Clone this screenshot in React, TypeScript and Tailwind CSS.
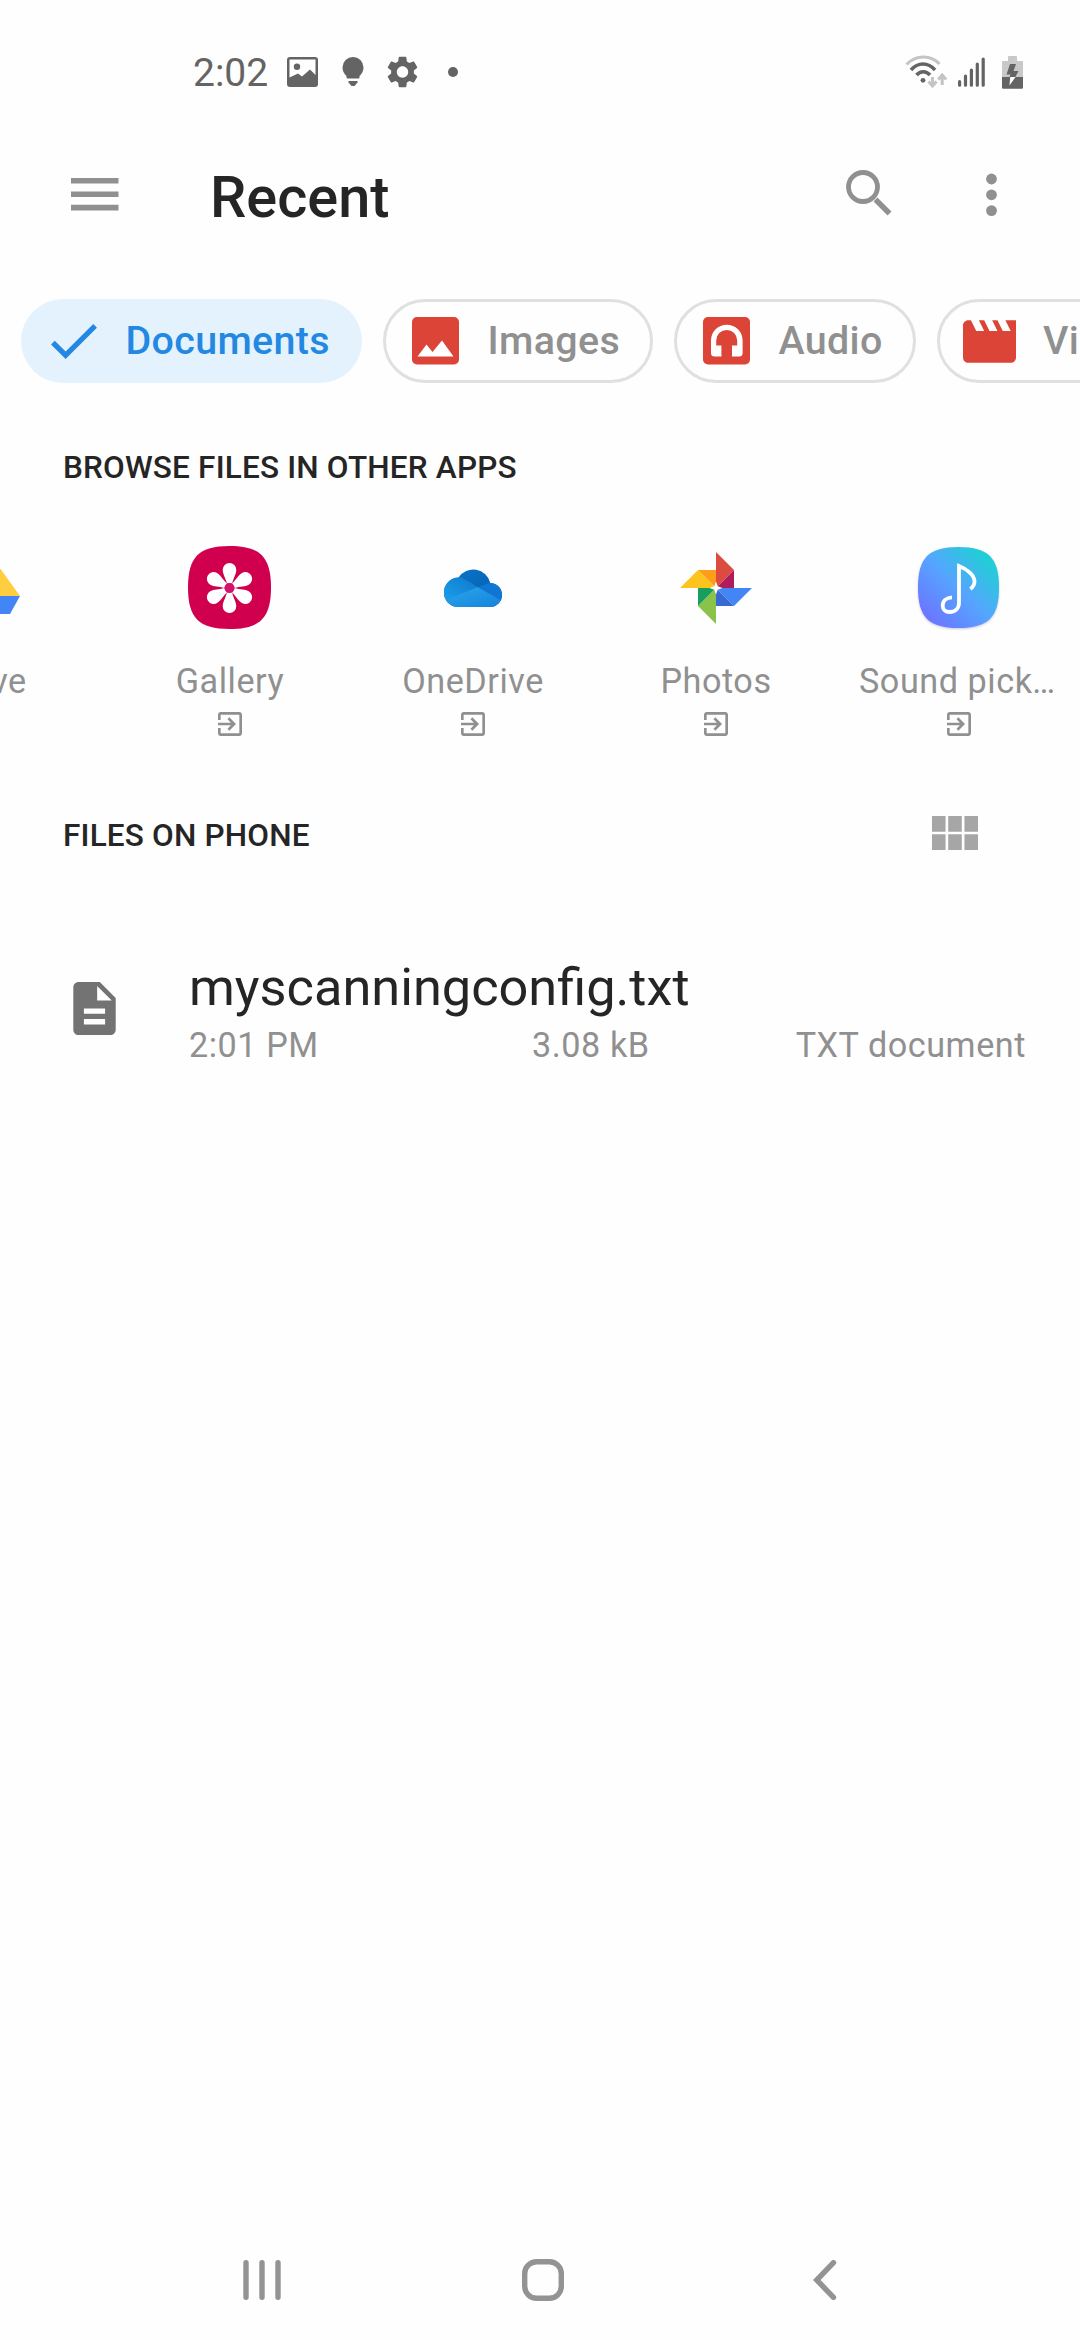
import React from "react";

const SQUIRCLE = "M41.5 0C72 0 83 11 83 41.5S72 83 41.5 83 0 72 0 41.5 11 0 41.5 0Z";

function StatusBar() {
  return (
    <div className="flex h-36 shrink-0 items-center pl-[193px] pr-[57px] text-[#646464]">
      <span className="mt-[3px] w-[94px] text-[39px] leading-none">2:02</span>
      <svg className="h-[30px] w-[31px]" viewBox="0 0 31 30">
        <path
          fill="currentColor"
          fillRule="evenodd"
          d="M3 0H28a3 3 0 0 1 3 3V27a3 3 0 0 1-3 3H3a3 3 0 0 1-3-3V3a3 3 0 0 1 3-3ZM2.5 2.5V20.5L11 16.5 15 19.5 23 12.5 28.5 18V2.5ZM10 6.5a3.2 3.2 0 1 1 0 6.4 3.2 3.2 0 0 1 0-6.4Z"
        />
      </svg>
      <svg className="ml-6 h-[30px] w-[22px]" viewBox="0 0 22 30" fill="currentColor">
        <path d="M11 0a10.5 10.5 0 0 1 10.5 10.5c0 4-2 6.5-4 8.500V20.500a1 1 0 0 1-1 1H5.500a1 1 0 0 1-1-1V19c-2-2-4-4.500-4-8.500A10.500 10.500 0 0 1 11 0Z" />
        <path d="M6.500 24h9v1.500L12.500 29h-3L6.500 25.500Z" />
      </svg>
      <svg className="ml-[23px] h-8 w-[31px]" viewBox="2.200 2 19.600 20" fill="currentColor">
        <path d="M19.140 12.940c.04-.3.06-.61.06-.94 0-.32-.02-.64-.07-.94l2.030-1.580c.18-.14.23-.41.12-.61l-1.920-3.320c-.12-.22-.37-.29-.59-.22l-2.390.96c-.5-.38-1.030-.7-1.620-.94L14.400 2.810c-.04-.24-.24-.41-.48-.41h-3.840c-.24 0-.43.17-.47.41L9.250 5.350c-.59.24-1.130.57-1.620.94L5.240 5.330c-.22-.08-.47 0-.59.22L2.740 8.870c-.12.21-.08.47.12.61l2.030 1.580c-.05.3-.09.63-.09.94s.02.64.07.94l-2.030 1.580c-.18.14-.23.41-.12.61l1.920 3.320c.12.22.37.29.59.22l2.390-.96c.5.38 1.030.7 1.620.94l.36 2.540c.05.24.24.41.48.41h3.840c.24 0 .44-.17.47-.41l.36-2.540c.59-.24 1.130-.56 1.620-.94l2.390.96c.22.08.47 0 .59-.22l1.920-3.320c.12-.22.07-.47-.12-.61l-2.010-1.580zM12 15.600c-1.980 0-3.600-1.620-3.600-3.600s1.620-3.600 3.600-3.600 3.600 1.620 3.600 3.600-1.620 3.600-3.600 3.600z" />
      </svg>
      <span className="ml-[30px] size-2.5 rounded-full bg-[#646464]" />

      <svg className="ml-auto h-[34px] w-[42px]" viewBox="0 0 42 34" fill="none">
        <path d="M1.500 9.500C11-.5 26-.5 34.500 9" stroke="#c4c4c4" strokeWidth="3" />
        <path d="M6 15C13 7 23 7 30 15" stroke="#646464" strokeWidth="3.500" />
        <path d="M11.500 20C15.500 15.500 21 15.500 25 20" stroke="#646464" strokeWidth="3.500" />
        <circle cx="18" cy="25.300" r="2.400" fill="#646464" />
        <g stroke="#c4c4c4" strokeWidth="3">
          <path d="M27.500 22V31M23.500 26.500L27.500 31 31.500 26.500" />
          <path d="M37.200 30V21M33.200 24.500L37.200 20 41.200 24.500" />
        </g>
      </svg>
      <svg className="ml-[11px] h-[30px] w-[27px]" viewBox="0 0 27 30" stroke="#646464" strokeWidth="3.200" strokeLinecap="round">
        <path d="M1.600 24.500V28.200M7.500 19V28.200M13.400 13V28.200M19.300 7V28.200M25.200 2V28.200" />
      </svg>
      <svg className="ml-[17px] h-[33px] w-[21px]" viewBox="0 0 21 33">
        <path fill="#c8c8c8" d="M7 0h7a1 1 0 0 1 1 1V5h5a1 1 0 0 1 1 1V21H0V6a1 1 0 0 1 1-1H6V1a1 1 0 0 1 1-1Z" />
        <path fill="#646464" d="M0 21H21V31.500a1.200 1.200 0 0 1-1.200 1.200H1.200A1.200 1.200 0 0 1 0 31.500Z" />
        <path fill="#646464" d="M8 8H14L11.500 15H16.500L13.300 21H7.500L8.500 18.500H4.500Z" />
        <path fill="#fff" d="M8.200 21H13.500L7.500 29.500Z" />
      </svg>
    </div>
  );
}

function Toolbar() {
  return (
    <header className="flex h-[102px] shrink-0 items-center pl-[71px] pr-[83px] text-[#909090]">
      <svg className="-mt-px h-[33px] w-12" viewBox="0 0 48 33" fill="currentColor">
        <path d="M0 0H47.500V5.600H0ZM0 13.500H47.500V19.100H0ZM0 26.800H47.500V32.400H0Z" />
      </svg>
      <h1 className="ml-[91px] mt-1 text-[57.700px] font-medium leading-[60px] text-[#252525]">Recent</h1>
      <svg className="-mt-1 ml-auto h-[46px] w-[46px]" viewBox="0 0 46 46" fill="none" stroke="currentColor">
        <circle cx="17" cy="17" r="14.500" strokeWidth="4.800" />
        <path d="M29.500 29.500L43.500 43.500" strokeWidth="5.500" />
      </svg>
      <svg className="ml-[94px] h-11 w-[11px]" viewBox="0 0 11 44" fill="currentColor">
        <circle cx="5.500" cy="6" r="5.400" />
        <circle cx="5.500" cy="21.800" r="5.400" />
        <circle cx="5.500" cy="37.600" r="5.400" />
      </svg>
    </header>
  );
}

function Chips() {
  const chip =
    "flex h-[84px] shrink-0 items-center rounded-full border-[3px] border-[#e0e0e0] text-[39.400px] tracking-[0.350px] font-medium leading-none text-[#909090]";
  return (
    <div className="mt-[53px] flex shrink-0 gap-[21px] overflow-hidden pl-[21px]">
      <div className="flex h-[84px] w-[341px] shrink-0 items-center rounded-full bg-[#e3f2fd] pl-[30px] text-[39.400px] tracking-[0.350px] font-medium leading-none text-[#2388e2]">
        <svg className="h-[35px] w-[46px]" viewBox="3.410 5.590 17.590 13.410" fill="currentColor">
          <path d="M9 16.170L4.830 12l-1.420 1.410L9 19 21 7l-1.410-1.410z" />
        </svg>
        <span className="ml-[28.500px]">Documents</span>
      </div>
      <div className={chip + " w-[270px] pl-[26px]"}>
        <svg className="h-12 w-[47px]" viewBox="0 0 47 48">
          <rect width="47" height="47.500" rx="5" fill="#db4437" />
          <path fill="#fff" d="M5.500 39.500 14.500 27.500 20.500 35 30 23.500 41.500 39.500Z" />
        </svg>
        <span className="ml-[28.500px]">Images</span>
      </div>
      <div className={chip + " w-[242px] pl-[26px]"}>
        <svg className="h-12 w-[47px]" viewBox="0 0 47 48">
          <rect width="47" height="47.500" rx="5" fill="#db4437" />
          <path
            fill="#fff"
            d="M8 36V23.500a15.800 15.800 0 0 1 31.600 0V36a3.500 3.500 0 0 1-3.500 3.500H29V28.500h5.200V23.500a10.500 10.500 0 0 0-21 0v5h5.200V39.500H11.500A3.500 3.500 0 0 1 8 36Z"
          />
        </svg>
        <span className="ml-[28.500px]">Audio</span>
      </div>
      <div className={chip + " w-[250px] pl-[23px]"}>
        <svg className="h-[43px] w-[53px]" viewBox="2 4 20 16" fill="#db4437">
          <path d="M18 4l2 4h-3l-2-4h-2l2 4h-3l-2-4H8l2 4H7L5 4H4c-1.100 0-1.990.9-1.990 2L2 18c0 1.100.9 2 2 2h16c1.100 0 2-.9 2-2V4h-4z" />
        </svg>
        <span className="ml-[27px]">Videos</span>
      </div>
    </div>
  );
}

function DriveIcon() {
  return (
    <svg className="h-[84px] w-[84px]" viewBox="0 0 84 84">
      <path fill="#0f9d58" d="M29 14 9 50 18 68 38 31Z" />
      <path fill="#ffcd40" d="M28 14H49L75 50H54Z" />
      <path fill="#4285f4" d="M28 50H75L65 68H18Z" />
    </svg>
  );
}

function GalleryIcon() {
  return (
    <svg className="h-[84px] w-[84px]" viewBox="0 0 84 84">
      <path fill="#d1004f" d={SQUIRCLE} />
      <g fill="#fff" transform="translate(41.500 42)">
        {[0, 60, 120, 180, 240, 300].map((a) => (
          <path
            key={a}
            transform={`rotate(${a})`}
            d="M-2.600-4.500C-3.800-10-6.800-14-6.800-18.300a6.800 6.800 0 0 1 13.600 0C6.800-14 3.800-10 2.600-4.500Z"
          />
        ))}
      </g>
      <circle cx="41.500" cy="42" r="5" fill="#d4116e" />
    </svg>
  );
}

function OneDriveIcon() {
  return (
    <svg className="h-[38px] w-[58px]" viewBox="0 0 58 38">
      <defs>
        <clipPath id="cloud">
          <path d="M14 38A14.300 14.300 0 0 1 0 23.500 14.800 14.800 0 0 1 14.500 8.600 17.500 17.500 0 0 1 46.300 14 12 12 0 0 1 58 26 12 12 0 0 1 46 38Z" />
        </clipPath>
        <linearGradient id="cloudLeft" x1="0" y1="1" x2="1" y2="0">
          <stop offset="0" stopColor="#1ba0ea" />
          <stop offset="1" stopColor="#0f78cd" />
        </linearGradient>
        <linearGradient id="cloudTop" x1="0" y1="0" x2="1" y2="1">
          <stop offset="0" stopColor="#0a78cb" />
          <stop offset="1" stopColor="#0458ab" />
        </linearGradient>
        <linearGradient id="cloudBottom" x1="0" y1="0" x2="1" y2="1">
          <stop offset="0" stopColor="#2aa9ec" />
          <stop offset="1" stopColor="#1581dc" />
        </linearGradient>
      </defs>
      <g clipPath="url(#cloud)">
        <path fill="url(#cloudTop)" d="M0 0H58V38H0Z" />
        <path fill="url(#cloudLeft)" d="M0 8.500H15C20 9 24 12 33.500 18L0 33Z" />
        <path fill="#1076d4" d="M33.500 18 46.500 13.500H58V33Z" />
        <path fill="url(#cloudBottom)" d="M0 32 33.500 18 58 32V38H0Z" />
      </g>
    </svg>
  );
}

function PhotosIcon() {
  return (
    <svg className="h-[72px] w-[72px]" viewBox="0 0 72 72">
      <path fill="#dc4b3f" d="M36 0 54 18 36 36Z" />
      <path fill="#b01c5b" d="M54 18V36H36Z" />
      <path fill="#4285f4" d="M36 36H72L54 54Z" />
      <path fill="#3768d3" d="M36 36 54 54H36Z" />
      <path fill="#8bc34a" d="M36 36V72L18 54Z" />
      <path fill="#189e5d" d="M36 36 18 54V36Z" />
      <path fill="#fdc41d" d="M0 36 18 18 36 36Z" />
      <path fill="#fd9d18" d="M18 18H36V36Z" />
      <path fill="#fff" d="M36 29.500 37.700 34.300 42.500 36 37.700 37.700 36 42.500 34.300 37.700 29.500 36 34.300 34.300Z" />
    </svg>
  );
}

function SoundIcon() {
  return (
    <svg className="-mt-px h-[82px] w-[81px] overflow-visible drop-shadow-[0_1px_1px_rgba(70,70,160,0.300)]" viewBox="0 0 81 82">
      <defs>
        <linearGradient id="sound" x1="0.100" y1="0.900" x2="0.900" y2="0.100">
          <stop offset="0" stopColor="#6c74ff" />
          <stop offset="0.500" stopColor="#55a5ff" />
          <stop offset="0.950" stopColor="#20cfd6" />
        </linearGradient>
      </defs>
      <path fill="url(#sound)" transform="scale(0.976)" d={SQUIRCLE} />
      <path
        fill="none"
        stroke="#fff"
        strokeWidth="3.800"
        d="M34 50.300C28 50.600 24.700 54 24.700 58.500 24.700 62.500 27.500 65 31.500 65 37 65 41 61.500 41 56V19C50 22.500 56.500 28.500 56.500 34.500 56.500 37.500 55 40 52.300 42"
      />
    </svg>
  );
}

function ExitIcon() {
  return (
    <svg className="mt-[11px] size-6" viewBox="3 3 18 18" fill="#909090">
      <path d="M10.090 15.590L11.500 17l5-5-5-5-1.410 1.410L12.670 11H3v2h9.670l-2.580 2.590zM19 3H5c-1.110 0-2 .9-2 2v4h2V5h14v14H5v-4H3v4c0 1.100.89 2 2 2h14c1.100 0 2-.9 2-2V5c0-1.100-.9-2-2-2z" />
    </svg>
  );
}

const apps = [
  { name: "Drive", Icon: DriveIcon },
  { name: "Gallery", Icon: GalleryIcon },
  { name: "OneDrive", Icon: OneDriveIcon },
  { name: "Photos", Icon: PhotosIcon },
  { name: "Sound picker", Icon: SoundIcon },
];

function AppRow() {
  return (
    <div className="mt-[58px] flex shrink-0 overflow-hidden">
      {apps.map(({ name, Icon }, i) => (
        <div key={name} className={"flex w-[243px] shrink-0 flex-col items-center" + (i === 0 ? " -ml-[135px]" : "")}>
          <div className="flex h-[84px] items-center justify-center">
            <Icon />
          </div>
          <div className="mt-[31px] h-10 w-[201px] truncate pl-px text-center text-[34.200px] leading-10 tracking-[0.550px] text-[#909090]">
            {name}
          </div>
          <ExitIcon />
        </div>
      ))}
    </div>
  );
}

function FileRow() {
  return (
    <div className="mt-[101px] flex shrink-0 pl-[73px]">
      <svg className="mt-[25px] h-[53px] w-[43px]" viewBox="4 2 16 20" fill="#737373">
        <path d="M14 2H6c-1.100 0-1.990.9-1.990 2L4 20c0 1.100.89 2 1.990 2H18c1.100 0 2-.9 2-2V8l-6-6zm2 16H8v-2h8v2zm0-4H8v-2h8v2zm-3-5V3.500L18.500 9H13z" />
      </svg>
      <div className="ml-[73px] flex w-[837px] flex-col">
        <div className="text-[52.300px] leading-[60px] text-[#252525]">myscanningconfig.txt</div>
        <div className="mt-2 flex text-[34.200px] leading-10 tracking-[0.550px] text-[#909090]">
          <span className="w-[343px]">2:01 PM</span>
          <span>3.08 kB</span>
          <span className="ml-auto">TXT document</span>
        </div>
      </div>
    </div>
  );
}

function NavBar() {
  return (
    <nav className="mt-auto flex h-[120px] shrink-0 items-center pl-[242px]">
      <svg className="h-10 w-10" viewBox="0 0 40 40" stroke="#939393" strokeWidth="5.400" strokeLinecap="round">
        <path d="M4 2.700V37.300M20 2.700V37.300M36 2.700V37.300" />
      </svg>
      <svg className="ml-[240px] h-[42px] w-[42px]" viewBox="0 0 42 42" fill="none" stroke="#939393" strokeWidth="5.400">
        <rect x="2.700" y="2.700" width="36.600" height="36.600" rx="12" />
      </svg>
      <svg className="ml-[249px] h-10 w-6" viewBox="0 0 24 40" fill="none" stroke="#939393" strokeWidth="5.400" strokeLinecap="round">
        <path d="M20.500 2.700 3.700 20 20.500 37.300" />
      </svg>
    </nav>
  );
}

export default function App() {
  return (
    <div className="flex h-[2340px] w-[1080px] flex-col overflow-hidden bg-[#fefefe] font-['Roboto',sans-serif]">
      <StatusBar />
      <Toolbar />
      <Chips />
      <h2 className="mt-[65px] shrink-0 pl-[63px] text-[31.500px] font-medium leading-10 tracking-[0.180px] text-[#252525]">
        BROWSE FILES IN OTHER APPS
      </h2>
      <AppRow />
      <div className="mt-20 flex h-10 shrink-0 justify-between pl-[63px] pr-[102px]">
        <h2 className="text-[31.500px] font-medium leading-10 tracking-[0.180px] text-[#252525]">FILES ON PHONE</h2>
        <svg className="h-[34px] w-[46px]" viewBox="4 5 17 13" preserveAspectRatio="none" fill="#a6a6a6">
          <path d="M4 11h5V5H4v6zm0 7h5v-6H4v6zm6 0h5v-6h-5v6zm6 0h5v-6h-5v6zm-6-7h5V5h-5v6zm6-6v6h5V5h-5z" />
        </svg>
      </div>
      <FileRow />
      <NavBar />
    </div>
  );
}
